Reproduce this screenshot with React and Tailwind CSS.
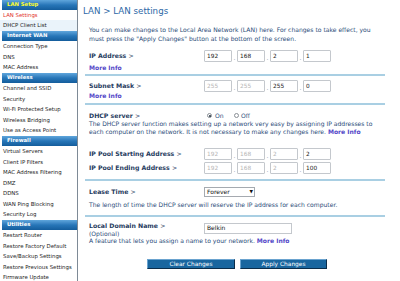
const menu = [
  { type: "head", label: "LAN Setup", first: true },
  { label: "LAN Settings", active: true },
  { label: "DHCP Client List", tint: true },
  { type: "head", label: "Internet WAN" },
  { label: "Connection Type" },
  { label: "DNS" },
  { label: "MAC Address" },
  { type: "head", label: "Wireless" },
  { label: "Channel and SSID" },
  { label: "Security" },
  { label: "Wi-Fi Protected Setup" },
  { label: "Wireless Bridging" },
  { label: "Use as Access Point" },
  { type: "head", label: "Firewall" },
  { label: "Virtual Servers" },
  { label: "Client IP Filters" },
  { label: "MAC Address Filtering" },
  { label: "DMZ" },
  { label: "DDNS" },
  { label: "WAN Ping Blocking" },
  { label: "Security Log" },
  { type: "head", label: "Utilities" },
  { label: "Restart Router" },
  { label: "Restore Factory Default" },
  { label: "Save/Backup Settings" },
  { label: "Restore Previous Settings" },
  { label: "Firmware Update" },
];

function SideItem({ item }) {
  if (item.type === "head") {
    return (
      <div
        className={`ml-[2px] flex items-center bg-gradient-to-b from-[#5fa6dc] via-[#2776b8] to-[#145d9c] pl-[5px] text-[5.3px] font-bold ${
          item.first ? "h-[9.5px] text-[#ffff2e]" : "h-[10.5px] text-white"
        }`}
      >
        {item.label}
      </div>
    );
  }
  return (
    <div
      className={`flex h-[10.5px] items-center pl-[3px] text-[5.4px] ${
        item.active ? "text-[#e2332b]" : "text-[#1e1e1e]"
      } ${item.tint ? "bg-[#eaf3fa]" : "bg-white"}`}
    >
      {item.label}
    </div>
  );
}

function IpBox({ value, dim }) {
  return (
    <div
      className={`flex h-[12px] w-[28px] items-center rounded-[1px] border border-[#c4c8cd] bg-white pl-[2px] text-[5.8px] ${
        dim ? "text-[#b5b5b5]" : "text-[#202020]"
      }`}
    >
      {value}
    </div>
  );
}

function Dot() {
  return <span className="flex h-[12px] w-[5px] items-end justify-center pb-[1px] text-[6px] leading-none text-[#7d8fa3]">.</span>;
}

function IpRow({ values, dims }) {
  return (
    <div className="flex items-center">
      <IpBox value={values[0]} dim={dims[0]} />
      <Dot />
      <IpBox value={values[1]} dim={dims[1]} />
      <Dot />
      <IpBox value={values[2]} dim={dims[2]} />
      <Dot />
      <IpBox value={values[3]} dim={dims[3]} />
    </div>
  );
}

function Label({ children }) {
  return (
    <div className="w-[119px] pl-[4px] text-[6.2px] leading-[8px] font-bold text-[#1f3b5e]">
      {children} <span className="font-normal">&gt;</span>
    </div>
  );
}

function MoreInfo() {
  return <span className="font-bold text-[#5448c8]">More Info</span>;
}

export default function App() {
  return (
    <div className="flex h-[281px] w-[400px] overflow-hidden bg-white font-['DejaVu_Sans',sans-serif]">
      <aside className="w-[78px] shrink-0 border-r border-[#7e8a96]">
        {menu.map((item) => (
          <SideItem key={item.label} item={item} />
        ))}
      </aside>

      <main className="flex-1 pr-[15px] text-[6.05px] leading-[8px] text-[#2a4b78]">
        <h1 className="flex h-[22px] items-center pl-[5px] text-[8.7px] text-[#2c68a6]">LAN &gt; LAN settings</h1>
        <p className="ml-[7px] mt-[2.5px] pl-[4px] leading-[9px]">
          You can make changes to the Local Area Network (LAN) here. For changes to take effect, you
          <br />
          must press the "Apply Changes" button at the bottom of the screen.
        </p>

        <section className="ml-[7px] border-b-2 border-[#a9cfe3] pb-[2px] pt-[7.5px]">
          <div className="flex h-[12px] items-center">
            <Label>IP Address</Label>
            <IpRow values={["192", "168", "2", "1"]} dims={[false, false, false, false]} />
          </div>
          <div className="mt-[2px] flex h-[8px] items-center pl-[4px]">
            <MoreInfo />
          </div>
        </section>

        <section className="ml-[7px] border-b-2 border-[#a9cfe3] pb-[3px] pt-[4px]">
          <div className="flex h-[12px] items-center">
            <Label>Subnet Mask</Label>
            <IpRow values={["255", "255", "255", "0"]} dims={[true, true, false, false]} />
          </div>
          <div className="flex h-[8px] items-center pl-[4px]">
            <MoreInfo />
          </div>
        </section>

        <section className="ml-[7px] border-b-2 border-[#a9cfe3] pb-[4.5px] pt-[6px]">
          <div className="flex h-[9px] items-center">
            <Label>DHCP server</Label>
            <div className="flex items-center pl-[3px]">
              <span className="flex h-[5px] w-[5px] items-center justify-center rounded-full border border-[#8a8f96] bg-white">
                <span className="h-[2px] w-[2px] rounded-full bg-[#1d2b3a]" />
              </span>
              <span className="ml-[3px]">On</span>
              <span className="ml-[10px] h-[5px] w-[5px] rounded-full border border-[#8a8f96] bg-white" />
              <span className="ml-[2.5px]">Off</span>
            </div>
          </div>
          <p className="pl-[4px]">
            The DHCP server function makes setting up a network very easy by assigning IP addresses to
            <br />
            each computer on the network. It is not necessary to make any changes here. <MoreInfo />
          </p>

          <div className="mt-[12.2px] flex h-[12px] items-center">
            <Label>IP Pool Starting Address</Label>
            <IpRow values={["192", "168", "2", "2"]} dims={[true, true, true, false]} />
          </div>
          <div className="mt-[2px] flex h-[12px] items-center">
            <Label>IP Pool Ending Address</Label>
            <IpRow values={["192", "168", "2", "100"]} dims={[true, true, true, false]} />
          </div>
        </section>

        <section className="ml-[7px] border-b-2 border-[#a9cfe3] pb-[5.3px] pt-[6px]">
          <div className="flex h-[10px] items-center">
            <Label>Lease Time</Label>
            <div className="flex h-[10px] w-[51px] items-center justify-between border border-[#a5aab0] bg-white pl-[2px] pr-[1px] text-[6px] text-[#111]">
              <span>Forever</span>
              <span className="text-[4.5px]">▼</span>
            </div>
          </div>
          <p className="mt-[4.7px] pl-[4px]">
            The length of time the DHCP server will reserve the IP address for each computer.
          </p>
        </section>

        <section className="ml-[7px] pt-[5px]">
          <div className="flex">
            <div className="w-[119px] leading-[7.6px]">
              <Label>Local Domain Name</Label>
              <div className="pl-[4px] leading-[7.6px]">(Optional)</div>
            </div>
            <div className="mt-[1px] flex h-[11px] w-[88px] items-center border border-[#c4c8cd] bg-white pl-[2px] text-[6px] text-[#111]">
              Belkin
            </div>
          </div>
          <p className="pl-[4px]">
            A feature that lets you assign a name to your network. <MoreInfo />
          </p>
          <div className="mt-[13.5px] flex justify-center gap-[5px] pl-[4px]">
            <button className="flex h-[10.7px] w-[88px] items-center justify-center border border-b-[#0b2d4a] border-l-[#6aa3cf] border-r-[#0b2d4a] border-t-[#6aa3cf] bg-[#19669f] text-[5.9px] text-white">
              Clear Changes
            </button>
            <button className="flex h-[10.7px] w-[87px] items-center justify-center border border-b-[#0b2d4a] border-l-[#6aa3cf] border-r-[#0b2d4a] border-t-[#6aa3cf] bg-[#19669f] text-[5.9px] text-white">
              Apply Changes
            </button>
          </div>
        </section>
      </main>
    </div>
  );
}
